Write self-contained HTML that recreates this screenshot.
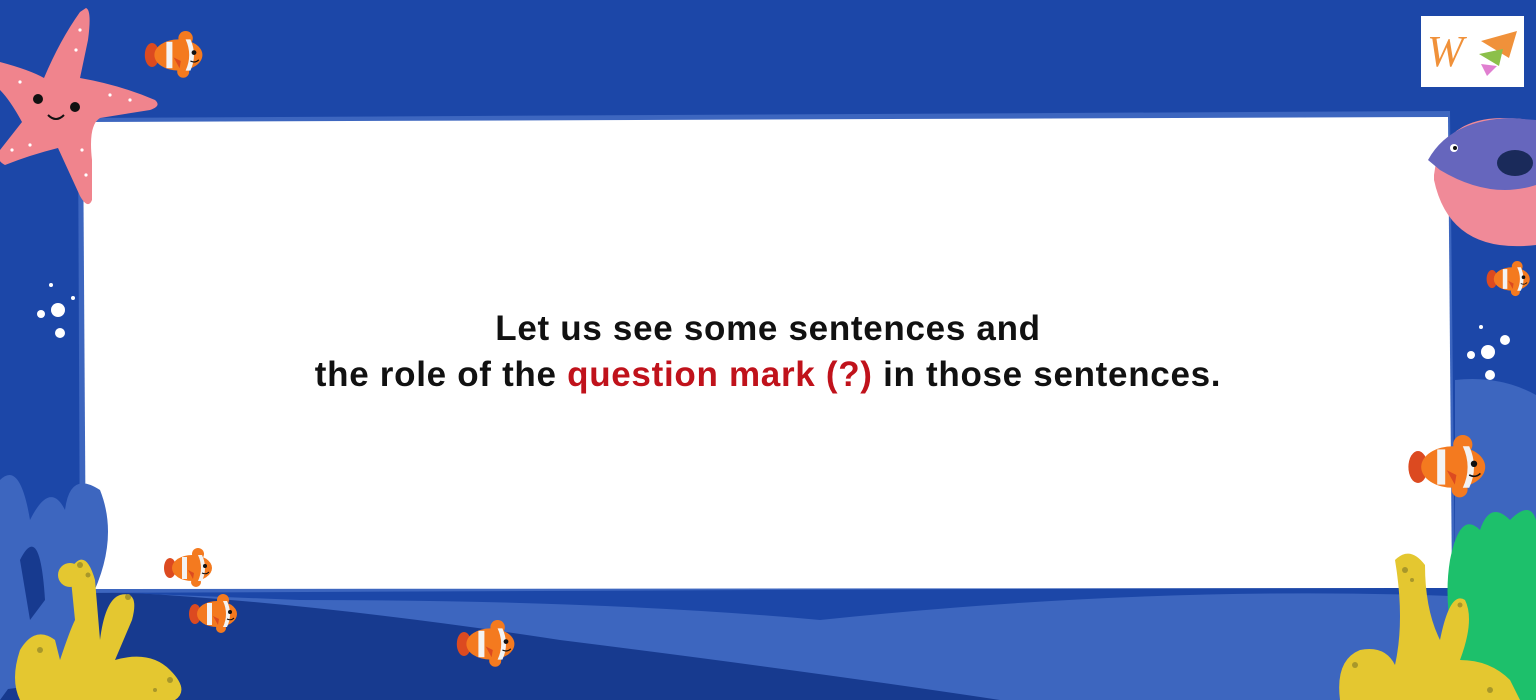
<!DOCTYPE html>
<html><head><meta charset="utf-8"><style>
html,body{margin:0;padding:0}
body{width:1536px;height:700px;position:relative;overflow:hidden;background:#1c47a8;font-family:"Liberation Sans",sans-serif}
svg{position:absolute;left:0;top:0}
.t{position:absolute;left:0;width:1536px;top:306px;text-align:center;font-weight:bold;font-size:35px;line-height:46px;color:#111;letter-spacing:0.7px}
.t span{color:#c0121b}
.logo{position:absolute;left:1421px;top:16px;width:103px;height:71px;background:#fff}
</style></head><body>
<svg width="1536" height="700" viewBox="0 0 1536 700">
<defs>
<g id="cf">
<ellipse cx="-20" cy="0" rx="6" ry="10" fill="#dc4a20"/>
<ellipse cx="2" cy="0" rx="20" ry="13" fill="#f47a1f"/>
<ellipse cx="8" cy="-14" rx="6" ry="6" fill="#f47a1f"/>
<ellipse cx="6" cy="14" rx="5" ry="5" fill="#f47a1f"/>
<rect x="-8" y="-11" width="5" height="22" fill="#f3f3f3"/>
<path d="M8 -13 q6 13 0 26 l4 0 q6 -13 0 -26z" fill="#f3f3f3"/>
<circle cx="15" cy="-2" r="2" fill="#111"/>
<path d="M12 5 q4 2 7 -1" stroke="#111" stroke-width="1" fill="none"/>
<path d="M-2 2 l6 3 l-1 6 z" fill="#dc4a20"/>
</g>
</defs>
<path d="M0 560 L1536 560 L1536 700 L0 700Z" fill="#3d66bf"/>
<path d="M80 590 Q300 600 560 640 Q800 670 1000 700 L0 700Z" fill="#173a8f"/>
<path d="M100 592 L1536 580 L1536 600 Q1200 580 820 620 Q600 600 300 600Z" fill="#1c47a8"/>
<path d="M1455 380 Q1500 375 1536 395 L1536 560 L1455 560Z" fill="#3d66bf"/>
<path d="M78 118 L1450 111 L1455 587 L80 593 Z" fill="#3d66bf"/>
<path d="M83 122 L1448 117 L1452 588 L86 589 Z" fill="#fff"/>
<path d="M0 480 Q20 460 30 520 Q50 480 65 510 Q70 470 100 490 Q120 540 90 600 L80 680 L0 690Z" fill="#3d66bf"/>
<path d="M20 560 Q40 520 45 600 L30 620Z" fill="#173a8f"/>
<g fill="#e4c730">
<path d="M70 570 Q85 545 95 580 L100 640 Q105 600 120 595 Q140 590 132 620 L115 660 Q150 650 170 670 Q190 690 175 700 L20 700 Q10 680 20 650 Q35 625 55 640 L60 660 Q70 630 75 620Z"/>
<circle cx="70" cy="575" r="12"/>
</g>
<g fill="#a8972a"><circle cx="80" cy="565" r="3"/><circle cx="88" cy="575" r="2.5"/><circle cx="128" cy="597" r="3"/><circle cx="40" cy="650" r="3"/><circle cx="170" cy="680" r="3"/><circle cx="155" cy="690" r="2"/></g>
<path d="M1470 700 Q1440 620 1450 560 Q1460 510 1480 530 Q1490 500 1510 520 Q1530 500 1536 520 L1536 700Z" fill="#1dc06b"/>
<g fill="#e4c730">
<path d="M1395 560 Q1410 545 1425 565 Q1425 610 1440 640 Q1450 590 1465 600 Q1475 620 1460 660 Q1490 660 1510 680 L1520 700 L1340 700 Q1335 660 1360 650 Q1385 645 1395 665 Q1405 620 1395 560Z"/>
</g>
<g fill="#a8972a"><circle cx="1405" cy="570" r="3"/><circle cx="1412" cy="580" r="2"/><circle cx="1460" cy="605" r="2.5"/><circle cx="1355" cy="665" r="3"/><circle cx="1490" cy="690" r="3"/></g>
<!-- starfish 5 arms -->
<path d="M86 8 Q92 10 88 40 L80 78 Q120 85 155 100 Q162 106 150 110 L100 118 Q88 125 92 160 L92 200 Q88 210 80 196 L58 148 Q30 155 5 165 Q-5 160 0 150 L22 122 Q10 100 0 90 L0 62 Q30 70 44 78 Q60 40 80 12Z" fill="#f0848d"/>
<g fill="#fff"><circle cx="80" cy="30" r="1.6"/><circle cx="76" cy="50" r="1.6"/><circle cx="110" cy="95" r="1.6"/><circle cx="130" cy="100" r="1.6"/><circle cx="82" cy="150" r="1.6"/><circle cx="86" cy="175" r="1.6"/><circle cx="30" cy="145" r="1.6"/><circle cx="12" cy="150" r="1.6"/><circle cx="20" cy="82" r="1.6"/></g>
<circle cx="38" cy="99" r="5" fill="#111"/><circle cx="75" cy="107" r="5" fill="#111"/>
<path d="M48 115 q8 8 16 0" stroke="#111" stroke-width="2" fill="none"/>
<path d="M1434 175 Q1440 120 1500 118 Q1536 118 1536 125 L1536 245 Q1450 255 1434 180Z" fill="#f08a98"/>
<path d="M1428 160 Q1450 120 1510 118 L1536 120 L1536 185 Q1490 200 1440 170 Z" fill="#6666bd"/>
<circle cx="1454" cy="148" r="4" fill="#fff"/><circle cx="1455" cy="148" r="2" fill="#111"/>
<ellipse cx="1515" cy="163" rx="18" ry="13" fill="#1a2a5a"/>
<g fill="#fff"><circle cx="58" cy="310" r="7"/><circle cx="60" cy="333" r="5"/><circle cx="41" cy="314" r="4"/><circle cx="51" cy="285" r="2"/><circle cx="73" cy="298" r="2"/>
<circle cx="1488" cy="352" r="7"/><circle cx="1490" cy="375" r="5"/><circle cx="1471" cy="355" r="4"/><circle cx="1481" cy="327" r="2"/><circle cx="1505" cy="340" r="5"/></g>
<use href="#cf" transform="translate(176,55) scale(1.2)"/>
<use href="#cf" transform="translate(190,568) scale(1.0)"/>
<use href="#cf" transform="translate(215,614) scale(1.0)"/>
<use href="#cf" transform="translate(488,644) scale(1.2)"/>
<use href="#cf" transform="translate(1510,279) scale(0.9)"/>
<use href="#cf" transform="translate(1450,467) scale(1.6)"/>
</svg>
<div class="logo"><svg width="103" height="71" viewBox="0 0 103 71">
<text x="6" y="50" font-family="Liberation Serif" font-style="italic" font-size="44" fill="#f0913a">W</text>
<path d="M60 25 L96 15 L88 42Z" fill="#f0913a"/>
<path d="M58 38 L82 33 L78 50Z" fill="#8cc04a"/>
<path d="M60 48 L76 50 L66 60Z" fill="#e07fd0"/>
</svg></div>
<div class="t">Let us see some sentences and<br>the role of the <span>question mark (?)</span> in those sentences.</div>
</body></html>
